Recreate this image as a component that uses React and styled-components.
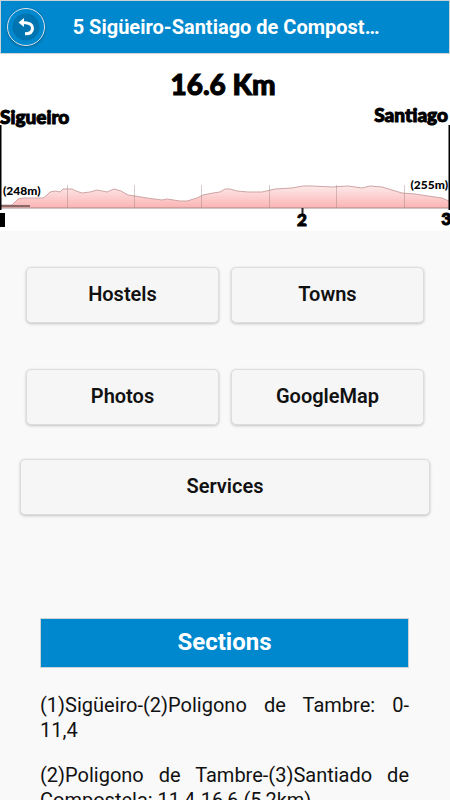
import React from "react";
import styled, { createGlobalStyle } from "styled-components";

const GlobalStyle = createGlobalStyle`
  *, *::before, *::after { box-sizing: border-box; }
  html { scrollbar-width: none; }
  body {
    margin: 0;
    background: #f9f9f9;
    color: #111;
    font-family: Roboto, "Liberation Sans", sans-serif;
  }
`;

const Header = styled.header`
  display: grid;
  grid-template-columns: 16% 1fr 14%;
  align-items: center;
  height: 54px;
  border: 1px solid #ccd2d6;
  background: #0088ce;
`;

const BackButton = styled.button`
  display: grid;
  place-items: center;
  width: 38px;
  height: 38px;
  margin-left: 6px;
  padding: 0;
  border: 1px solid #dde3e8;
  border-radius: 50%;
  background: #0088ce;
  box-shadow: 0 1px 3px rgba(0, 0, 0, 0.3);
  cursor: pointer;
`;

const Title = styled.h1`
  margin: 0;
  overflow: hidden;
  color: #fff;
  font-size: 20px;
  line-height: 26px;
  font-weight: 700;
  text-align: center;
  text-overflow: ellipsis;
  white-space: nowrap;
`;

const Profile = styled.svg`
  display: block;
  width: 100%;
  height: auto;
  background: #fff;
`;

const ProfileLabel = styled.text`
  fill: #000;
  stroke: #000;
  stroke-width: ${(p) => (p.$size > 16 ? 1 : 0)}px;
  font-family: Lato, sans-serif;
  font-weight: 900;
  font-size: ${(p) => p.$size}px;
`;

const Menu = styled.nav`
  display: flex;
  flex-direction: column;
  padding: 36px 20px 0;
`;

const MenuRow = styled.div`
  display: grid;
  grid-template-columns: 1fr 1fr;
  gap: 12px;
  padding: 0 6px;
  margin-bottom: ${(p) => p.$gap}px;
`;

const MenuButton = styled.button`
  height: 56px;
  padding: 0 16px 2px;
  border: 1px solid #ddd;
  border-radius: 5px;
  background: #f6f6f6;
  box-shadow: 0 1px 3px rgba(0, 0, 0, 0.22);
  color: #111;
  font-family: inherit;
  font-size: 20px;
  line-height: 26px;
  font-weight: 600;
  cursor: pointer;
`;

const Sections = styled.section`
  padding: 103px 41px 0 40px;
`;

const SectionHeading = styled.h2`
  margin: 0 0 25px;
  padding: 9px 0 11px;
  border: 1px solid #ccd2d6;
  background: #0088ce;
  color: #fff;
  font-size: 24px;
  line-height: 28px;
  font-weight: 700;
  text-align: center;
`;

const Stage = styled.p`
  margin: 0 0 20px;
  font-size: 20px;
  line-height: 25px;
  text-align: justify;
`;

const ridge =
  "M1 151 L12 151 L15 148 L18 145 L23 144 L43 144 L47 141 L50 138 L55 137 L60 138 L63 135 L72 135 L76 137 L82 139 L90 138 L97 136 L107 138 L114 135 L121 137 L128 141 L135 142 L147 144 L162 146 L167 145 L180 147 L187 147 L197 144 L203 141 L208 140 L213 139 L220 138 L225 135 L230 135 L237 137 L248 138 L262 138 L275 135 L292 134 L303 132 L312 132 L332 133 L348 132 L362 134 L370 132 L382 133 L392 136 L402 139 L415 140 L428 142 L442 144 L449 147";
const kilometreMarks = [67, 134, 201, 269, 336, 404];

function ElevationProfile() {
  return (
    <Profile viewBox="0 0 450 177" role="img" aria-label="Elevation profile, 16.6 Km">
      <defs>
        <linearGradient id="terrain" x1="0" y1="132" x2="0" y2="155" gradientUnits="userSpaceOnUse">
          <stop offset="0" stopColor="#fdeaea" />
          <stop offset="1" stopColor="#fbb0b0" />
        </linearGradient>
      </defs>
      <path d={`${ridge} L449 154 L1 154 Z`} fill="url(#terrain)" />
      <path d={ridge} fill="none" stroke="#cfa5a5" strokeWidth="1" strokeLinejoin="round" />
      {kilometreMarks.map((x) => (
        <path key={x} d={`M${x}.5 131 V154`} stroke="#967878" strokeOpacity="0.4" />
      ))}
      <path d="M0 154 H450" stroke="#a98a8a" />
      <path d="M0 152 H30" stroke="#8a6868" strokeWidth="2" />
      <path d="M0 71 V156 M450 71 V156" stroke="#000" strokeWidth="3" />
      <path d="M302.5 154 V160" stroke="#222" strokeWidth="2" />
      <ProfileLabel $size={28} x="223" y="41" textAnchor="middle">16.6 Km</ProfileLabel>
      <ProfileLabel $size={19} x="0" y="70">Sigueiro</ProfileLabel>
      <ProfileLabel $size={19} x="448" y="68" textAnchor="end">Santiago</ProfileLabel>
      <ProfileLabel $size={12} x="3" y="141">(248m)</ProfileLabel>
      <ProfileLabel $size={12} x="448" y="135" textAnchor="end">(255m)</ProfileLabel>
      <path d="M0 159 H5 V173 H0 Z" fill="#000" />
      <ProfileLabel $size={17} x="302" y="172" textAnchor="middle">2</ProfileLabel>
      <ProfileLabel $size={17} x="451" y="171" textAnchor="end">3</ProfileLabel>
    </Profile>
  );
}

function BackIcon() {
  return (
    <svg width="28" height="28" viewBox="0 0 28 28" aria-hidden="true">
      <circle cx="14" cy="14" r="13.5" fill="#0074b0" />
      <path d="M6.5 9.5 L12 5 V14 Z" fill="#fff" />
      <path d="M10 9.5 C17 9.5 20.5 11.5 20.5 15.2 C20.5 19 18 20.8 13 20.8" fill="none" stroke="#fff" strokeWidth="3" />
    </svg>
  );
}

export default function App() {
  return (
    <>
      <GlobalStyle />
      <Header>
        <BackButton type="button" aria-label="Back">
          <BackIcon />
        </BackButton>
        <Title>5 Sigüeiro-Santiago de Compostela</Title>
      </Header>
      <main>
        <ElevationProfile />
        <Menu>
          <MenuRow $gap={46}>
            <MenuButton type="button">Hostels</MenuButton>
            <MenuButton type="button">Towns</MenuButton>
          </MenuRow>
          <MenuRow $gap={34}>
            <MenuButton type="button">Photos</MenuButton>
            <MenuButton type="button">GoogleMap</MenuButton>
          </MenuRow>
          <MenuButton type="button">Services</MenuButton>
        </Menu>
        <Sections>
          <SectionHeading>Sections</SectionHeading>
          <Stage>(1)Sigüeiro-(2)Poligono de Tambre: 0-11,4</Stage>
          <Stage>(2)Poligono de Tambre-(3)Santiado de Compostela: 11,4-16,6 (5,2km)</Stage>
        </Sections>
      </main>
    </>
  );
}
